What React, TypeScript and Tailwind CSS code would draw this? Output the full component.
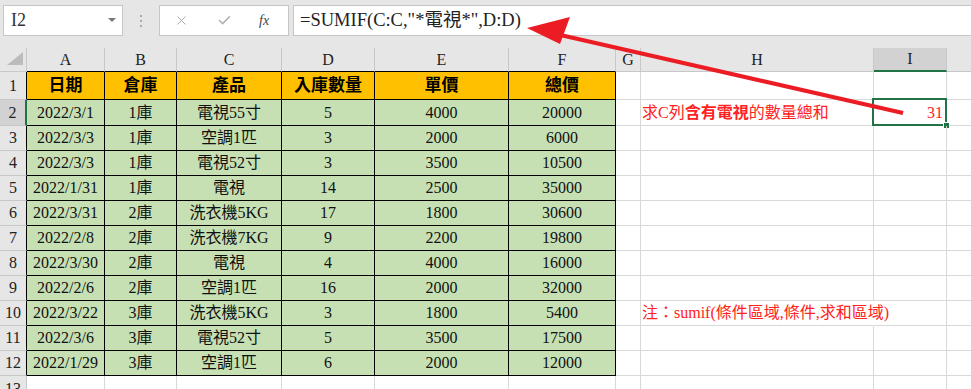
import { X, Check } from "lucide-react";

const serif = "font-['Liberation_Serif','Times_New_Roman','DejaVu_Serif','Noto_Sans_CJK_TC',serif]";

const cols = [
  { key: "A", w: "w-[78px]" },
  { key: "B", w: "w-[72px]" },
  { key: "C", w: "w-[105px]" },
  { key: "D", w: "w-[93px]" },
  { key: "E", w: "w-[134px]" },
  { key: "F", w: "w-[107px]" },
];

const headers = ["日期", "倉庫", "產品", "入庫數量", "單價", "總價"];

const rows = [
  ["2022/3/1", "1庫", "電視55寸", "5", "4000", "20000"],
  ["2022/3/3", "1庫", "空調1匹", "3", "2000", "6000"],
  ["2022/3/3", "1庫", "電視52寸", "3", "3500", "10500"],
  ["2022/1/31", "1庫", "電視", "14", "2500", "35000"],
  ["2022/3/31", "2庫", "洗衣機5KG", "17", "1800", "30600"],
  ["2022/2/8", "2庫", "洗衣機7KG", "9", "2200", "19800"],
  ["2022/3/30", "2庫", "電視", "4", "4000", "16000"],
  ["2022/2/6", "2庫", "空調1匹", "16", "2000", "32000"],
  ["2022/3/22", "3庫", "洗衣機5KG", "3", "1800", "5400"],
  ["2022/3/6", "3庫", "電視52寸", "5", "3500", "17500"],
  ["2022/1/29", "3庫", "空調1匹", "6", "2000", "12000"],
];

function RowHead({ n, active }: { n: number; active?: boolean }) {
  return (
    <div
      className={`w-[27px] shrink-0 flex items-center justify-center text-[16px] text-[#222] border-b border-[#c8c8c8] ${
        active ? "bg-[#d2d2d2] border-r-2 border-r-[#217346]" : "bg-[#e6e6e6] border-r border-r-black"
      }`}
    >
      {n}
    </div>
  );
}

// G..J trailing grid cells
function Tail({ h, i, sel }: { h?: React.ReactNode; i?: React.ReactNode; sel?: boolean }) {
  return (
    <>
      <div className="w-[25px] shrink-0 border-r border-b border-[#d9d9d9]" />
      <div
        className={`w-[233px] shrink-0 border-b border-[#d9d9d9] flex items-center pl-[1px] whitespace-nowrap text-[16px] text-[#ff2222] ${
          h && !sel ? "border-r border-r-transparent" : "border-r"
        }`}
      >
        {h}
      </div>
      <div className="w-[73px] shrink-0 border-r border-b border-[#d9d9d9] relative flex items-center justify-end pr-[3px] text-[16px] text-[#ff2222]">
        {i}
        {sel && (
          <>
            <div className="absolute -left-[2px] -top-[2px] w-[75px] h-[28px] border-2 border-[#217346]" />
            <div className="absolute -right-[4px] -bottom-[4px] w-[7px] h-[7px] bg-[#217346] border border-white" />
          </>
        )}
      </div>
      <div className="flex-1 border-b border-[#d9d9d9]" />
    </>
  );
}

export default function App() {
  return (
    <div className={`relative w-[971px] h-[389px] overflow-hidden bg-white ${serif}`}>
      {/* Formula bar */}
      <div className="h-[48px] bg-[#e6e6e6] flex items-start pt-[5px] pl-[3px]">
        <div className="w-[120px] h-[31px] bg-white border border-[#c6c6c6] flex items-center justify-between pl-[7px] pr-[6px]">
          <span className="text-[18px] text-[#333]">I2</span>
          <svg width="8" height="5" viewBox="0 0 8 5">
            <path d="M0 0 L8 0 L4 4 Z" fill="#777" />
          </svg>
        </div>
        <div className="w-[36px] h-[31px] flex flex-col items-center justify-center gap-[3px]">
          <span className="w-[2px] h-[2px] bg-[#aaa]" />
          <span className="w-[2px] h-[2px] bg-[#aaa]" />
          <span className="w-[2px] h-[2px] bg-[#aaa]" />
        </div>
        <div className="w-[130px] h-[31px] bg-white border border-[#c6c6c6] flex items-center pl-[14px]">
          <X className="w-[15px] h-[15px] text-[#a6a6a6]" strokeWidth={1.5} />
          <Check className="w-[15px] h-[15px] text-[#b0b0b0] ml-[28px]" strokeWidth={2.5} />
          <span className="ml-[27px] text-[14px] italic text-[#444]">fx</span>
        </div>
        <div className="ml-[4px] flex-1 h-[31px] bg-white border border-[#c6c6c6] border-r-0 flex items-center pl-[6px]">
          <span className="text-[18.5px] text-[#222] whitespace-nowrap">=SUMIF(C:C,"*電視*",D:D)</span>
        </div>
      </div>

      {/* Column headers */}
      <div className="flex h-[24px] bg-[#e6e6e6] text-[16px] text-[#222]">
        <div className="w-[27px] shrink-0 border-r border-b border-[#c8c8c8] relative">
          <svg className="absolute left-0 top-0" width="27" height="24" viewBox="0 0 27 24">
            <path d="M23 4 L23 17 L7 17 Z" fill="#bcbcbc" />
          </svg>
        </div>
        {cols.map((c) => (
          <div
            key={c.key}
            className={`${c.w} shrink-0 flex items-center justify-center border-r border-r-[#c8c8c8] border-b border-b-black`}
          >
            {c.key}
          </div>
        ))}
        <div className="w-[25px] shrink-0 flex items-center justify-center border-r border-b border-[#c8c8c8]">G</div>
        <div className="w-[233px] shrink-0 flex items-center justify-center border-r border-b border-[#c8c8c8]">H</div>
        <div className="w-[73px] shrink-0 flex items-center justify-center bg-[#d2d2d2] border-r border-r-[#c8c8c8] border-b-2 border-b-[#217346]">
          I
        </div>
        <div className="flex-1 border-b border-[#c8c8c8]" />
      </div>

      {/* Row 1: header */}
      <div className="flex h-[28px]">
        <RowHead n={1} />
        {headers.map((t, i) => (
          <div
            key={t}
            className={`${cols[i].w} shrink-0 bg-[#ffc000] border-r border-b border-black flex items-center justify-center text-[17px] font-bold text-black`}
          >
            {t}
          </div>
        ))}
        <Tail />
      </div>

      {/* Data rows */}
      {rows.map((r, ri) => {
        const n = ri + 2;
        return (
          <div key={n} className={`flex ${n === 2 ? "h-[26px]" : "h-[25px]"}`}>
            <RowHead n={n} active={n === 2} />
            {r.map((v, ci) => (
              <div
                key={ci}
                className={`${cols[ci].w} shrink-0 bg-[#c6e0b4] border-r border-b border-black flex items-center justify-center text-[16px] text-[#111]`}
              >
                {v}
              </div>
            ))}
            {n === 2 ? (
              <Tail
                h={
                  <span>
                    求C列<b>含有電視</b>的數量總和
                  </span>
                }
                i="31"
                sel
              />
            ) : n === 10 ? (
              <Tail h={<span>注：sumif(條件區域,條件,求和區域)</span>} />
            ) : (
              <Tail />
            )}
          </div>
        );
      })}

      {/* Row 13 */}
      <div className="flex h-[25px]">
        <div className="w-[27px] shrink-0 bg-[#e6e6e6] border-r border-[#c8c8c8] flex items-center justify-center text-[16px] text-[#222]">
          13
        </div>
        {cols.map((c) => (
          <div key={c.key} className={`${c.w} shrink-0 border-r border-[#d9d9d9]`} />
        ))}
        <div className="w-[25px] shrink-0 border-r border-[#d9d9d9]" />
        <div className="w-[233px] shrink-0 border-r border-[#d9d9d9]" />
        <div className="w-[73px] shrink-0 border-r border-[#d9d9d9]" />
      </div>

      {/* Red annotation arrow */}
      <svg className="absolute left-0 top-0 pointer-events-none" width="971" height="389" viewBox="0 0 971 389">
        <line x1="556" y1="34" x2="903" y2="113" stroke="#ec1c24" strokeWidth="4" />
        <path d="M527 28 L570 17 L560 44 Z" fill="#ec1c24" />
      </svg>
    </div>
  );
}
